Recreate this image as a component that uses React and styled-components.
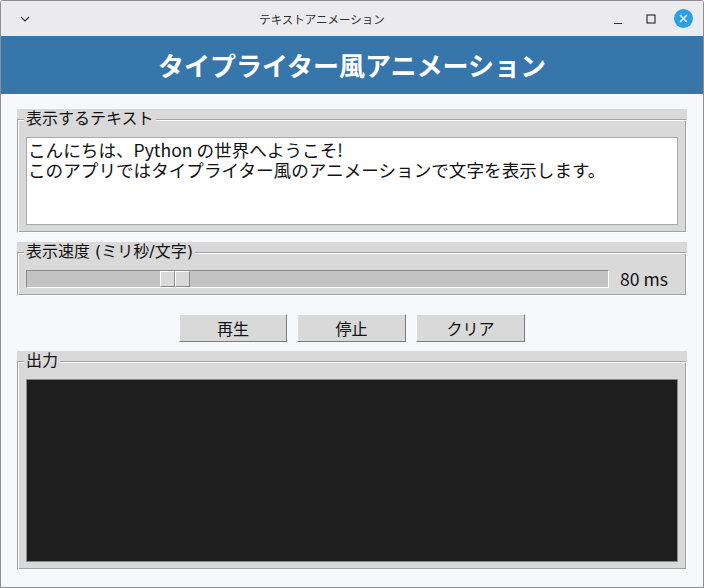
import React from "react";
import styled, { createGlobalStyle } from "styled-components";

const Global = createGlobalStyle`
  html, body { margin: 0; padding: 0; background: #f7f8fc; }
  * { box-sizing: border-box; }
`;

const FONT = `"Noto Sans CJK JP", "Noto Sans", sans-serif`;
const UIFONT = `"Noto Sans", "Noto Sans CJK JP", sans-serif`;
const LABELFONT = `"DejaVu Sans", "Noto Sans CJK JP", sans-serif`;

const Window = styled.div`
  width: 704px;
  height: 588px;
  border: 1px solid #8e8e8e;
  border-radius: 3px 3px 0 0;
  background: #f7f8fc;
  display: flex;
  flex-direction: column;
  font-family: ${FONT};
  overflow: hidden;
`;

const TitleBar = styled.div`
  height: 35px;
  flex: none;
  background: #ebebed;
  display: grid;
  grid-template-columns: 60px 1fr 100px;
  align-items: center;
`;

const TitleText = styled.div`
  text-align: center;
  font-family: ${UIFONT};
  font-size: 11.5px;
  color: #2e2e2e;
  padding-right: 20px;
`;

const Controls = styled.div`
  display: flex;
  align-items: center;
  justify-content: flex-end;
  gap: 13px;
  padding-right: 10px;
`;

const IconBox = styled.div`
  width: 20px;
  height: 20px;
  display: flex;
  align-items: center;
  justify-content: center;
`;

const CloseButton = styled.div`
  width: 19px;
  height: 19px;
  border-radius: 50%;
  background: #2b9fe2;
  display: flex;
  align-items: center;
  justify-content: center;
`;

const Header = styled.div`
  height: 58px;
  flex: none;
  background: #3776ab;
  color: #fff;
  font-weight: 700;
  font-size: 26px;
  display: flex;
  align-items: center;
  justify-content: center;
  padding-bottom: 2px;
`;

const Content = styled.div`
  flex: 1;
  display: flex;
  flex-direction: column;
  padding: 15px 16px 17px 16px;
`;

const FrameWrap = styled.div`
  background: #d9d9d9;
  margin-top: ${(p) => p.$mt || 0}px;
  flex: ${(p) => (p.$grow ? 1 : "none")};
  display: flex;
  flex-direction: column;
`;

const Fieldset = styled.fieldset`
  margin: 0;
  min-width: 0;
  flex: 1;
  display: flex;
  flex-direction: column;
  padding: 8px 8px 7px 8px;
  border: 1px solid;
  border-color: #a2a2a2 #ffffff #ffffff #a2a2a2;
  box-shadow: inset 1px 1px 0 #ffffff, inset -1px -1px 0 #a2a2a2;
`;

const Legend = styled.legend`
  padding: 0 2px;
  margin-left: -2px;
  background: #d9d9d9;
  font-family: ${LABELFONT};
  font-size: 16px;
  line-height: 20px;
  color: #111;
`;

const TextArea = styled.div`
  height: 88px;
  background: #fff;
  border: 1px solid #a9a9a9;
  padding: 2px 1px;
  font-size: 17.6px;
  line-height: 20px;
  color: #111;
  white-space: pre;
`;

const OutputArea = styled.div`
  flex: 1;
  background: #1e1e1e;
  border: 1px solid #8a8a8a;
`;

const SliderRow = styled.div`
  display: flex;
  align-items: center;
  gap: 11px;
  height: 18px;
`;

const Trough = styled.div`
  position: relative;
  flex: 1;
  height: 18px;
  background: #c3c3c3;
  border: 1px solid;
  border-color: #8a8a8a #ffffff #ffffff #8a8a8a;
`;

const Handle = styled.div`
  position: absolute;
  top: 0;
  width: 30px;
  height: 16px;
  display: flex;
`;

const HandleHalf = styled.div`
  flex: 1;
  background: #d9d9d9;
  border: 1px solid;
  border-color: #ffffff #8a8a8a #8a8a8a #ffffff;
`;

const ValueText = styled.div`
  width: 58px;
  font-size: 17.6px;
  color: #111;
  line-height: 20px;
`;

const ButtonRow = styled.div`
  display: flex;
  justify-content: center;
  gap: 10px;
  margin-top: 18px;
`;

const Button = styled.button`
  width: ${(p) => p.$w}px;
  height: 28px;
  background: #d9d9d9;
  border: 1px solid;
  border-color: #ffffff #7c7c7c #7c7c7c #ffffff;
  font-family: ${FONT};
  font-size: 16px;
  color: #111;
  padding: 0;
  display: flex;
  align-items: center;
  justify-content: center;
`;

const sliderMin = 10;
const sliderMax = 300;
const value = 80;

export default function App() {
  const frac = (value - sliderMin) / (sliderMax - sliderMin);
  return (
    <>
      <Global />
      <Window>
        <TitleBar>
          <IconBox style={{ marginLeft: 14 }}>
            <svg width="12" height="8" viewBox="0 0 12 8">
              <path d="M2 2 L6 6 L10 2" stroke="#333" strokeWidth="1.2" fill="none" />
            </svg>
          </IconBox>
          <TitleText>テキストアニメーション</TitleText>
          <Controls>
            <IconBox>
              <svg width="12" height="12" viewBox="0 0 12 12">
                <path d="M2 10.5 H10" stroke="#333" strokeWidth="1.2" />
              </svg>
            </IconBox>
            <IconBox>
              <svg width="12" height="12" viewBox="0 0 12 12">
                <rect x="2" y="2" width="8" height="8" stroke="#333" strokeWidth="1.2" fill="none" />
              </svg>
            </IconBox>
            <CloseButton>
              <svg width="11" height="11" viewBox="0 0 11 11">
                <path d="M2 2 L9 9 M9 2 L2 9" stroke="#fff" strokeWidth="1.3" />
              </svg>
            </CloseButton>
          </Controls>
        </TitleBar>
        <Header>タイプライター風アニメーション</Header>
        <Content>
          <FrameWrap>
            <Fieldset>
              <Legend>表示するテキスト</Legend>
              <TextArea>
                {"こんにちは、Python の世界へようこそ!\nこのアプリではタイプライター風のアニメーションで文字を表示します。"}
              </TextArea>
            </Fieldset>
          </FrameWrap>
          <FrameWrap $mt={9}>
            <Fieldset>
              <Legend>表示速度 (ミリ秒/文字)</Legend>
              <SliderRow>
                <Trough>
                  <Handle style={{ left: `calc((100% - 30px) * ${frac})` }}>
                    <HandleHalf />
                    <HandleHalf />
                  </Handle>
                </Trough>
                <ValueText>{value} ms</ValueText>
              </SliderRow>
            </Fieldset>
          </FrameWrap>
          <ButtonRow>
            <Button $w={108}>再生</Button>
            <Button $w={109}>停止</Button>
            <Button $w={109}>クリア</Button>
          </ButtonRow>
          <FrameWrap $mt={9} $grow>
            <Fieldset>
              <Legend>出力</Legend>
              <OutputArea />
            </Fieldset>
          </FrameWrap>
        </Content>
      </Window>
    </>
  );
}
